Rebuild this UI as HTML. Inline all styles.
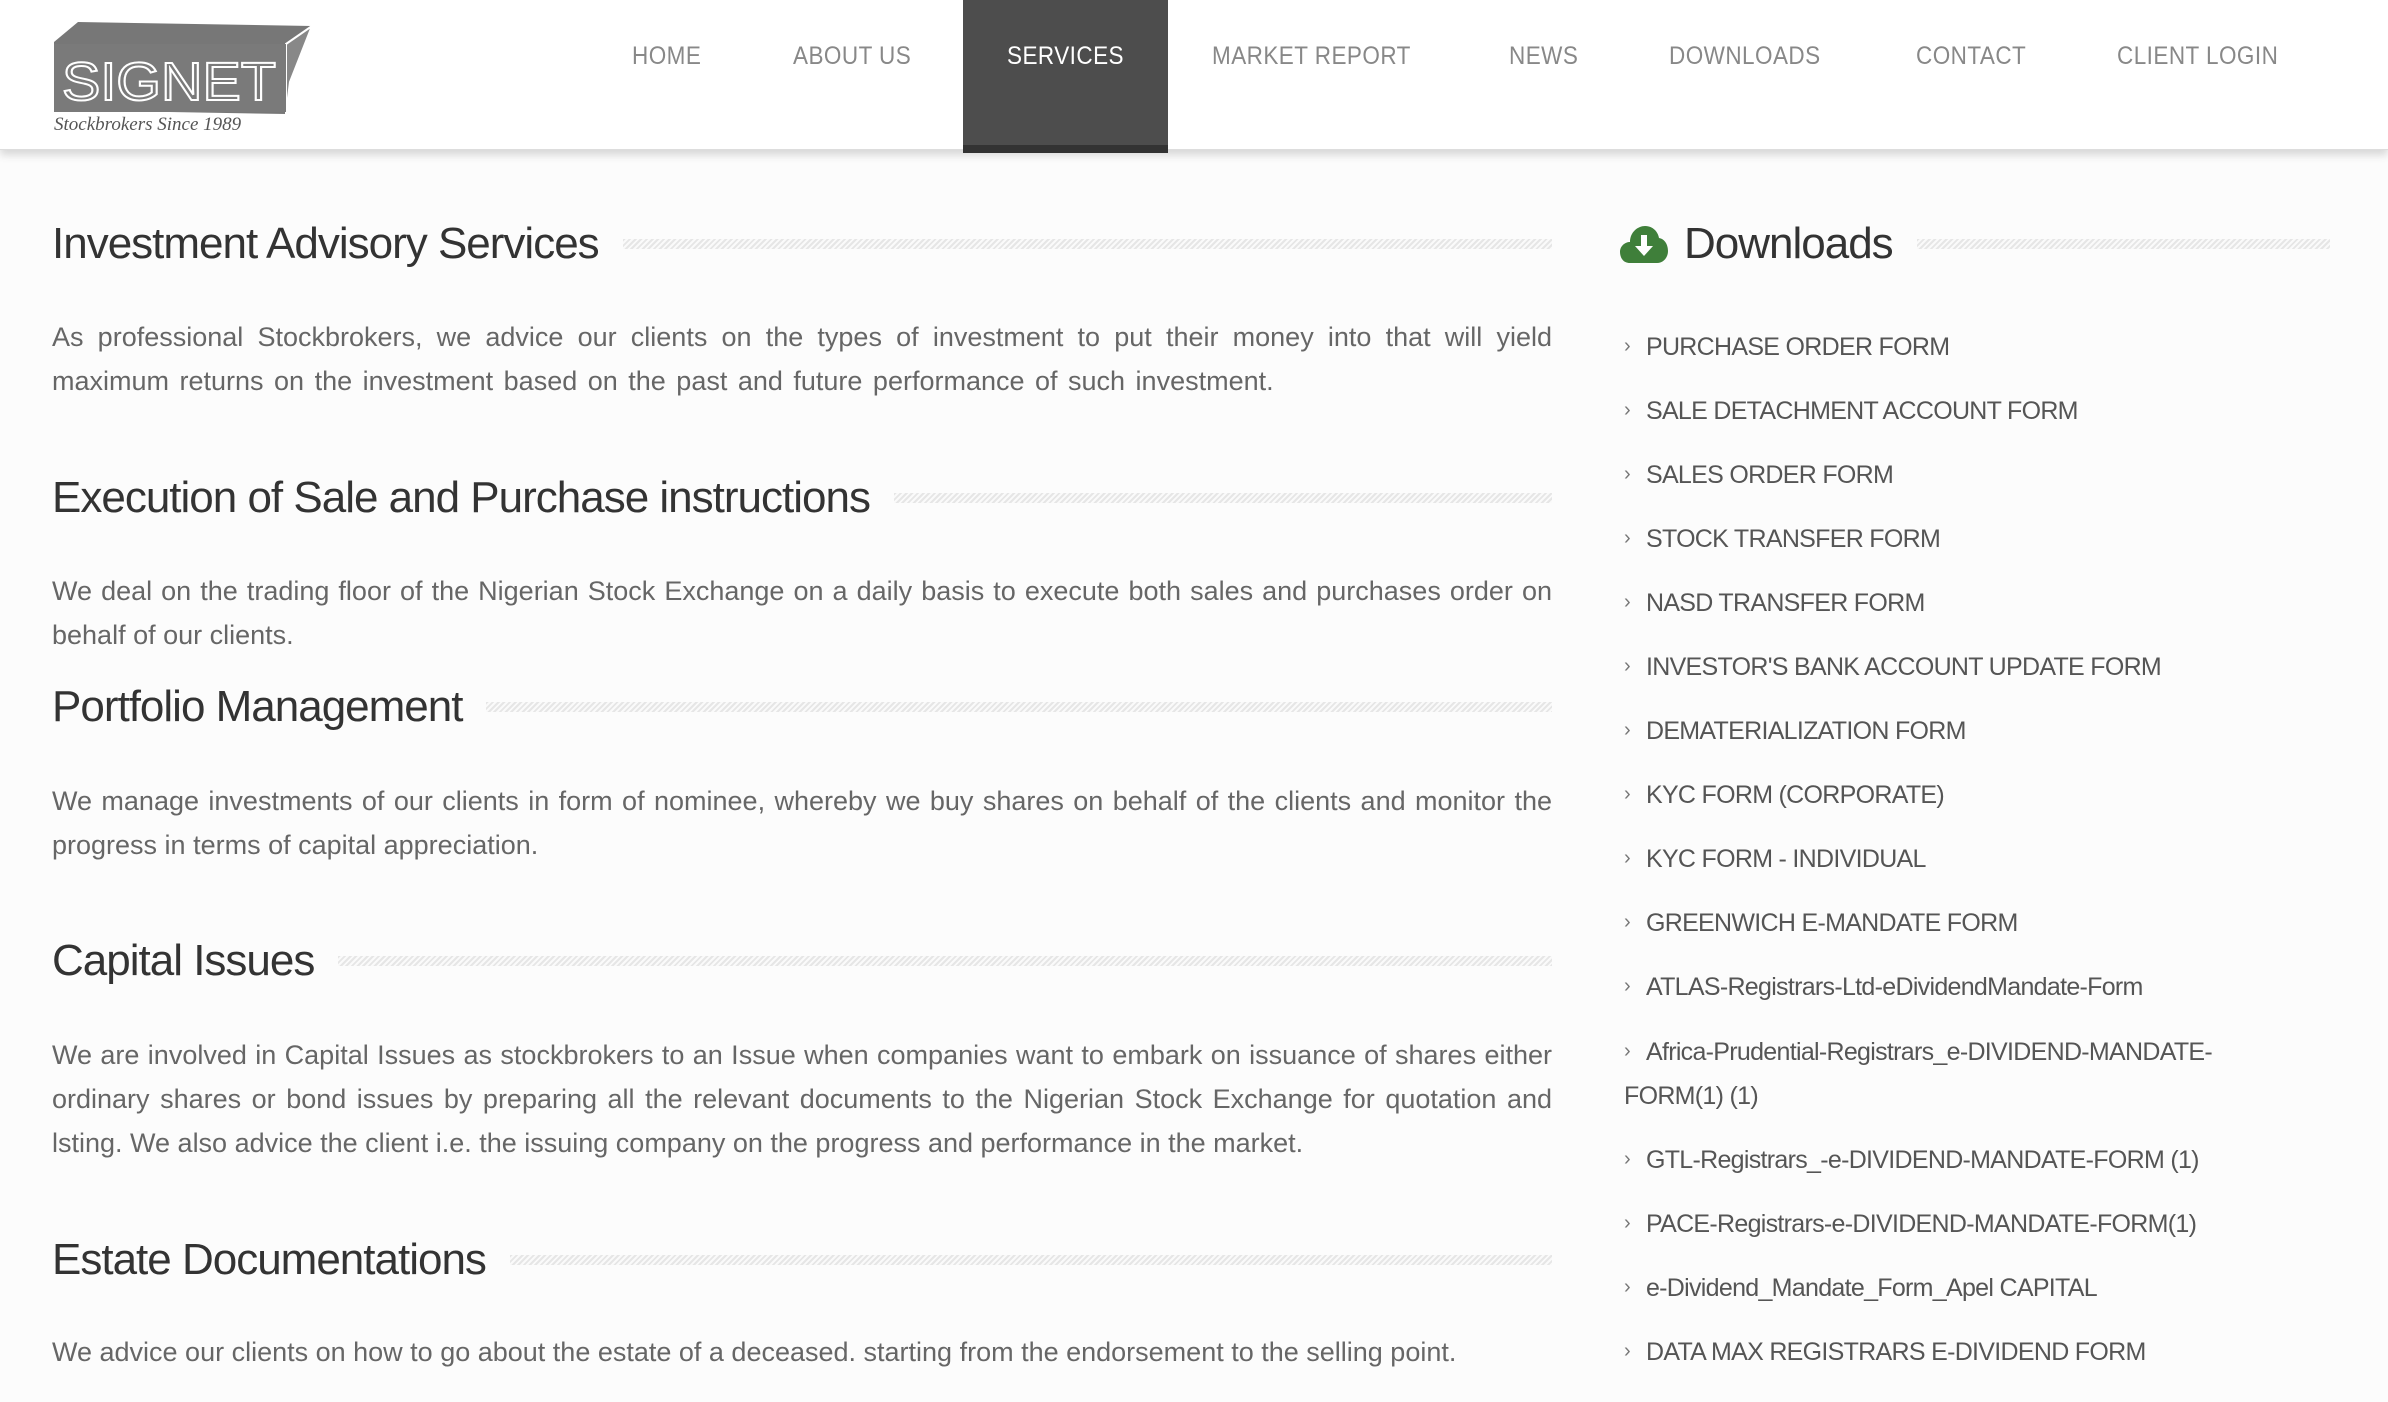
<!DOCTYPE html>
<html><head><meta charset="utf-8"><style>
*{margin:0;padding:0;box-sizing:border-box}
body{width:2388px;height:1402px;background:#fcfcfc;font-family:"Liberation Sans",sans-serif;color:#555;position:relative;overflow:hidden}
.hdr{position:absolute;left:0;top:0;width:2388px;height:150px;background:#fff;border-bottom:1px solid #ddd;box-shadow:0 5px 8px rgba(0,0,0,.15)}
.nav{position:absolute;top:42px;font-size:25px;color:#888;letter-spacing:0.5px;white-space:nowrap;transform:scaleX(.9);transform-origin:left}
.svc{position:absolute;left:963px;top:0;width:205px;height:153px;background:#4d4d4d;border-bottom:8px solid #333}
.a{position:absolute;white-space:nowrap}
h2{position:absolute;left:52px;font-weight:normal;font-size:44px;letter-spacing:-1px;color:#333;white-space:nowrap;display:flex;align-items:center;width:1500px}
h2::after{content:"";flex:1;height:10px;margin-left:24px;background:repeating-linear-gradient(135deg,#e6e6e6 0 2px,#fafafa 2px 4px)}
p{position:absolute;left:52px;width:1500px;font-size:27px;line-height:44px;text-align:justify;color:#666}
.li{position:absolute;left:1624px;font-size:25px;letter-spacing:-0.7px;color:#555;white-space:nowrap}
.li b{font-weight:normal;font-size:20px;color:#777;margin-right:16px;position:relative;top:-3px}
</style></head><body>
<div class="hdr"></div>
<div class="svc"></div>
<svg style="position:absolute;left:50px;top:20px" width="265" height="100" viewBox="0 0 265 100">
<polygon points="4,22 28,2 262,6 240,62 236,94 4,90" fill="#777"/>
<polygon points="236,24 262,6 240,62 236,94" fill="#888" stroke="#fff" stroke-width="2"/>
<rect x="4" y="24" width="232" height="68" fill="#7a7a7a"/>
<text x="12" y="80" font-family="Liberation Sans,sans-serif" font-size="54" fill="#7a7a7a" stroke="#fff" stroke-width="2" textLength="214" lengthAdjust="spacingAndGlyphs">SIGNET</text>
</svg>
<div class="a" style="left:54px;top:114px;font-size:19px;font-style:italic;color:#555;font-family:'Liberation Serif',serif">Stockbrokers Since 1989</div>
<div class="nav" style="left:632px">HOME</div>
<div class="nav" style="left:793px">ABOUT US</div>
<div class="nav" style="left:1007px;color:#fff">SERVICES</div>
<div class="nav" style="left:1212px">MARKET REPORT</div>
<div class="nav" style="left:1509px">NEWS</div>
<div class="nav" style="left:1669px">DOWNLOADS</div>
<div class="nav" style="left:1916px">CONTACT</div>
<div class="nav" style="left:2117px">CLIENT LOGIN</div>

<h2 style="top:219px">Investment Advisory Services</h2>
<p style="top:315px;word-spacing:3px">As professional Stockbrokers, we advice our clients on the types of investment to put their money into that will yield maximum returns on the investment based on the past and future performance of such investment.</p>
<h2 style="top:473px">Execution of Sale and Purchase instructions</h2>
<p style="top:569px">We deal on the trading floor of the Nigerian Stock Exchange on a daily basis to execute both sales and purchases order on behalf of our clients.</p>
<h2 style="top:682px">Portfolio Management</h2>
<p style="top:779px">We manage investments of our clients in form of nominee, whereby we buy shares on behalf of the clients and monitor the progress in terms of capital appreciation.</p>
<h2 style="top:936px">Capital Issues</h2>
<p style="top:1033px">We are involved in Capital Issues as stockbrokers to an Issue when companies want to embark on issuance of shares either ordinary shares or bond issues by preparing all the relevant documents to the Nigerian Stock Exchange for quotation and lsting. We also advice the client i.e. the issuing company on the progress and performance in the market.</p>
<h2 style="top:1235px">Estate Documentations</h2>
<p style="top:1330px">We advice our clients on how to go about the estate of a deceased. starting from the endorsement to the selling point.</p>

<svg style="position:absolute;left:1620px;top:224px" width="48" height="40" viewBox="0 0 48 40">
<path d="M10 39 C2 39 0 32 0 28 C0 22 5 18 10 18 C10 8 18 2 25 2 C33 2 38 8 39 14 C45 15 48 21 48 27 C48 34 43 39 37 39 Z" fill="#3f7f3a"/>
<path d="M21 11 h6 v11 h6 l-9 10 l-9 -10 h6 z" fill="#fff"/>
</svg>
<h2 style="left:1684px;top:219px;width:646px">Downloads</h2>

<div class="li" style="top:333px"><b>›</b>PURCHASE ORDER FORM</div>
<div class="li" style="top:397px"><b>›</b>SALE DETACHMENT ACCOUNT FORM</div>
<div class="li" style="top:461px"><b>›</b>SALES ORDER FORM</div>
<div class="li" style="top:525px"><b>›</b>STOCK TRANSFER FORM</div>
<div class="li" style="top:589px"><b>›</b>NASD TRANSFER FORM</div>
<div class="li" style="top:653px"><b>›</b>INVESTOR'S BANK ACCOUNT UPDATE FORM</div>
<div class="li" style="top:717px"><b>›</b>DEMATERIALIZATION FORM</div>
<div class="li" style="top:781px"><b>›</b>KYC FORM (CORPORATE)</div>
<div class="li" style="top:845px"><b>›</b>KYC FORM - INDIVIDUAL</div>
<div class="li" style="top:909px"><b>›</b>GREENWICH E-MANDATE FORM</div>
<div class="li" style="top:973px"><b>›</b>ATLAS-Registrars-Ltd-eDividendMandate-Form</div>
<div class="li" style="top:1038px"><b>›</b>Africa-Prudential-Registrars_e-DIVIDEND-MANDATE-</div>
<div class="li" style="top:1082px">FORM(1) (1)</div>
<div class="li" style="top:1146px"><b>›</b>GTL-Registrars_-e-DIVIDEND-MANDATE-FORM (1)</div>
<div class="li" style="top:1210px"><b>›</b>PACE-Registrars-e-DIVIDEND-MANDATE-FORM(1)</div>
<div class="li" style="top:1274px"><b>›</b>e-Dividend_Mandate_Form_Apel CAPITAL</div>
<div class="li" style="top:1338px"><b>›</b>DATA MAX REGISTRARS E-DIVIDEND FORM</div>
</body></html>
